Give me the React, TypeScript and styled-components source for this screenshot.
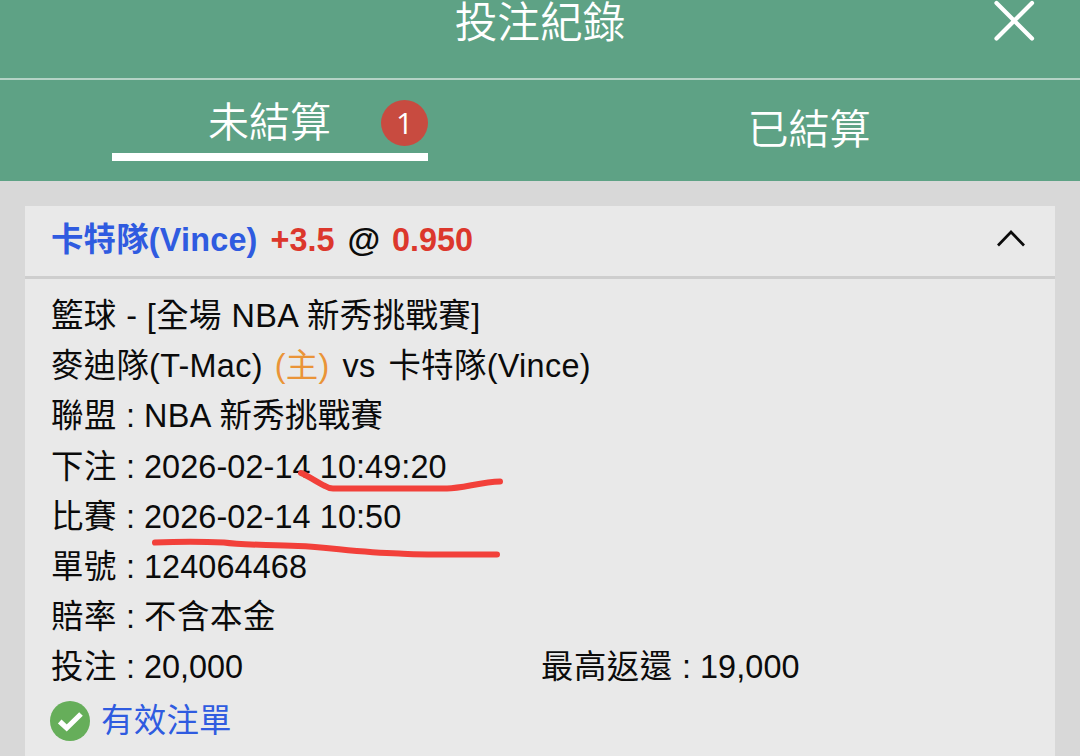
import { useState } from "react";
import { createGlobalStyle, styled } from "styled-components";

const details = [
  { label: "聯盟", value: "NBA 新秀挑戰賽", spacing: 0.4 },
  { label: "下注", value: "2026-02-14 10:49:20", spacing: 0.1 },
  { label: "比賽", value: "2026-02-14 10:50", spacing: 0.1 },
  { label: "單號", value: "124064468", spacing: 0.1 },
  { label: "賠率", value: "不含本金", spacing: 0.6 },
];

const App = () => {
  const [tab, setTab] = useState("open");
  const [expanded, setExpanded] = useState(true);

  return (
    <Page>
      <GlobalStyle />
      <Header>
        <Title>投注紀錄</Title>
        <CloseButton aria-label="close">
          <svg width="42" height="42" viewBox="0 0 42 42">
            <path
              d="M2.5 3 38 38.500M38 3 2.5 38.500"
              fill="none"
              stroke="#fff"
              strokeWidth="4.200"
              strokeLinecap="round"
            />
          </svg>
        </CloseButton>
      </Header>
      <Tabs>
        <Tab onClick={() => setTab("open")}>
          <TabInner $active={tab === "open"}>
            未結算
            <Badge>1</Badge>
          </TabInner>
        </Tab>
        <Tab onClick={() => setTab("settled")}>
          <TabInner $active={tab === "settled"}>已結算</TabInner>
        </Tab>
      </Tabs>
      <Card>
        <CardHeader onClick={() => setExpanded(!expanded)}>
          <Pick>
            <Team>卡特隊(Vince)</Team>
            <Odds>+3.5</Odds>
            <At>@</At>
            <Odds>0.950</Odds>
          </Pick>
          <svg width="30" height="20" viewBox="0 0 30 20">
            <path
              d="M2 16.5 15 3 28 16.5"
              fill="none"
              stroke="#0b0b0b"
              strokeWidth="2.7"
            />
          </svg>
        </CardHeader>
        {expanded && (
          <CardBody>
            <Row $spacing={0.45}>籃球 - [全場 NBA 新秀挑戰賽]</Row>
            <Row $spacing={0.3}>
              麥迪隊(T-Mac)
              <Home>(主)</Home>
              <Versus>vs</Versus>
              卡特隊(Vince)
            </Row>
            {details.map((item) => (
              <Row key={item.label}>
                <Label>{item.label}</Label>
                <Colon>:</Colon>
                <Value $spacing={item.spacing}>{item.value}</Value>
              </Row>
            ))}
            <Amounts>
              <Row>
                <Label>投注</Label>
                <Colon>:</Colon>
                <Value>20,000</Value>
              </Row>
              <Row>
                <Label $wide>最高返還</Label>
                <Colon>:</Colon>
                <Value $spacing={0.1}>19,000</Value>
              </Row>
            </Amounts>
            <Status>
              <svg width="40" height="40" viewBox="0 0 40 40">
                <circle cx="20" cy="20" r="20" fill="#66ae5a" />
                <path
                  d="M9.700 20.500 16.700 27 31 13"
                  fill="none"
                  stroke="#fff"
                  strokeWidth="5.200"
                />
              </svg>
              <StatusText>有效注單</StatusText>
            </Status>
            <Marks width="360" height="90" viewBox="0 0 360 90">
              <path d="M152 5C161 9 168 14 176 18Q180 20.500 184 20.500H298C313 20.500 332 14 351 13.500" />
              <path d="M6 74.500C29 73.500 54 73.500 75 74.500C92 77 116 76.500 149 78C179 79 209 84.500 250 85.500C269 87 299 86.500 348 86.500" />
            </Marks>
          </CardBody>
        )}
      </Card>
    </Page>
  );
};

export default App;

const GlobalStyle = createGlobalStyle`
  * {
    box-sizing: border-box;
  }
  body {
    margin: 0;
    background: #d8d8d8;
    overflow: hidden;
  }
  button {
    padding: 0;
    border: none;
    background: none;
    font: inherit;
    color: inherit;
    cursor: pointer;
  }
  svg {
    display: block;
    flex-shrink: 0;
  }
`;

const Page = styled.div`
  height: 756px;
  overflow: hidden;
  background: #d8d8d8;
  color: #0b0b0b;
  font-family: "Liberation Sans", "Noto Sans CJK TC", sans-serif;
  font-size: 32.4px;
`;

const Header = styled.header`
  display: grid;
  grid-template-columns: 1fr auto 1fr;
  height: 80px;
  padding-right: 44px;
  padding-left: 44px;
  background: #5ea285;
  border-bottom: 2px solid #b5d3c6;
  color: #fff;
`;

const Title = styled.h1`
  grid-column: 2;
  margin: 0;
  font-size: 42.7px;
  font-weight: 350;
  line-height: 46px;
`;

const CloseButton = styled.button`
  justify-self: end;
  align-self: start;
`;

const Tabs = styled.nav`
  display: grid;
  grid-template-columns: 1fr 1fr;
  height: 101px;
  background: #5ea285;
  color: #fff;
  font-size: 41px;
`;

const Tab = styled.button`
  display: flex;
  justify-content: center;
  align-items: flex-start;
`;

const TabInner = styled.span<{ $active: boolean }>`
  display: flex;
  align-items: center;
  justify-content: ${({ $active }) => ($active ? "flex-end" : "center")};
  gap: 50px;
  width: 316px;
  height: ${({ $active }) => ($active ? "81px" : "92px")};
  padding-top: ${({ $active }) => ($active ? "4px" : "0")};
  padding-right: ${({ $active }) => ($active ? "0" : "2px")};
  border-bottom: ${({ $active }) => ($active ? "8px solid #fff" : "none")};
  font-weight: 350;
`;

const Badge = styled.span`
  display: flex;
  align-items: center;
  justify-content: center;
  width: 47px;
  height: 46px;
  margin-top: 9px;
  border-radius: 50%;
  background: #c84b40;
  font-family: "Open Sans", sans-serif;
  font-size: 30px;
  font-weight: 400;
  line-height: 46px;
`;

const Card = styled.section`
  height: 560px;
  margin: 25px 25px 0;
  background: #e9e9e9;
`;

const CardHeader = styled.div`
  display: flex;
  align-items: center;
  justify-content: space-between;
  height: 73px;
  padding: 0 29px 4px 26px;
  border-bottom: 3px solid #cecece;
  font-weight: bold;
  cursor: pointer;
`;

const Pick = styled.div`
  display: flex;
  gap: 13px;
  padding-top: 2px;
  line-height: 50px;
`;

const Team = styled.span`
  color: #2f5be0;
  letter-spacing: 0.2px;
`;

const Odds = styled.span`
  color: #dc372c;
`;

const At = styled.span`
  width: 31.5px;
  font-size: 33.5px;
`;

const CardBody = styled.div`
  position: relative;
  padding: 12px 26px;
`;

const Row = styled.div<{ $spacing?: number }>`
  display: flex;
  height: 50.2px;
  line-height: 50.2px;
  letter-spacing: ${({ $spacing = 0 }) => $spacing}px;
  white-space: pre;
`;

const Home = styled.span`
  margin-left: 12px;
  color: #ea9437;
`;

const Versus = styled.span`
  margin: 0 13px 0 13px;
`;

const Label = styled.span<{ $wide?: boolean }>`
  width: ${({ $wide }) => ($wide ? "141px" : "75px")};
  letter-spacing: 0.5px;
`;

const Colon = styled.span`
  width: 18px;
`;

const Value = styled.span<{ $spacing?: number }>`
  letter-spacing: ${({ $spacing = 0 }) => $spacing}px;
`;

const Amounts = styled.div`
  display: grid;
  grid-template-columns: 490px 1fr;
`;

const Status = styled.div`
  display: flex;
  align-items: center;
  gap: 11px;
  height: 56px;
  margin-left: -1px;
  color: #2f5be0;
`;

const StatusText = styled.span`
  padding-bottom: 6px;
  letter-spacing: 0.3px;
`;

/* pen strokes drawn over the bet time and the match time */
const Marks = styled.svg`
  position: absolute;
  top: 189px;
  left: 124px;
  pointer-events: none;

  path {
    fill: none;
    stroke: #f2403a;
    stroke-width: 6;
    stroke-linecap: round;
    stroke-linejoin: round;
  }
`;
